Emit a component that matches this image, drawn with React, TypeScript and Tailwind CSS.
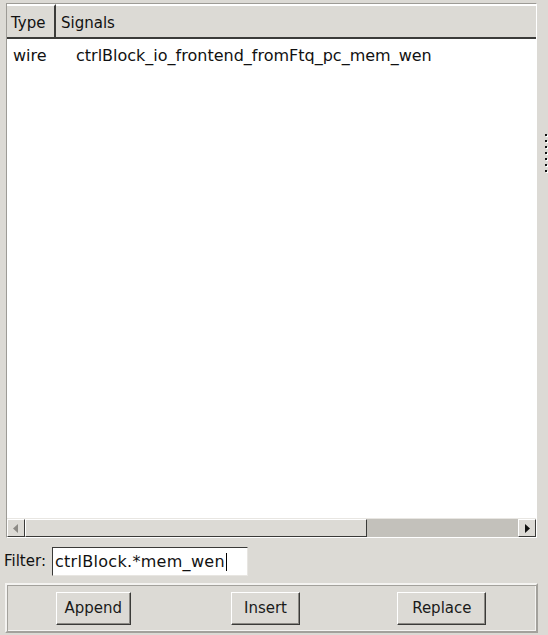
import React from "react"

const font = { fontFamily: '"DejaVu Sans", sans-serif' }

function TkButton({ label, width }: { label: string; width: string }) {
  return (
    <button
      className={`h-[33px] ${width} bg-[#dcdad5] text-[15px] text-[#1a1a1a] border border-t-white border-l-white border-r-[#3a3a38] border-b-[#3a3a38] shadow-[inset_-1px_-1px_0_#8c8a85]`}
    >
      {label}
    </button>
  )
}

export default function App() {
  return (
    <div style={font} className="w-[548px] h-[635px] bg-[#dcdad5] text-[#111] overflow-hidden">
      <div className="flex">
        {/* Signal list */}
        <div className="ml-[6px] mt-[3px] w-[531px] h-[535px] flex flex-col border border-t-[#9d9b96] border-l-[#9d9b96] border-r-white border-b-white">
          {/* Header */}
          <div className="flex h-[35px] shrink-0 border-b-2 border-[#3b3b39] text-[15px]">
            <div className="w-[49px] flex items-center pl-[4px] pt-[3px] border-t-2 border-t-white border-r-2 border-r-[#3b3b39]">
              Type
            </div>
            <div className="flex-1 flex items-center pl-[5px] pt-[3px] border-t-2 border-t-white">
              Signals
            </div>
          </div>

          {/* Rows */}
          <div className="flex-1 bg-white text-[16px]">
            <div className="flex h-[33px] items-center">
              <span className="w-[69px] pl-[6px]">wire</span>
              <span>ctrlBlock_io_frontend_fromFtq_pc_mem_wen</span>
            </div>
          </div>

          {/* Horizontal scrollbar */}
          <div className="flex h-[19px] shrink-0 bg-[#c3c1bb] border-t border-[#e8e6e2]">
            <div className="w-[18px] flex items-center justify-center bg-[#dcdad5] border border-t-white border-l-white border-r-[#3a3a38] border-b-[#3a3a38]">
              <svg width="6" height="9" viewBox="0 0 6 9">
                <path d="M5 0 L0 4.5 L5 9 Z" fill="#8c8a85" />
              </svg>
            </div>
            <div className="w-[342px] bg-[#dcdad5] border border-t-white border-l-white border-r-[#3a3a38] border-b-[#3a3a38]" />
            <div className="flex-1" />
            <div className="w-[18px] flex items-center justify-center bg-[#dcdad5] border border-t-white border-l-white border-r-[#3a3a38] border-b-[#3a3a38]">
              <svg width="6" height="9" viewBox="0 0 6 9">
                <path d="M1 0 L6 4.5 L1 9 Z" fill="#111" />
              </svg>
            </div>
          </div>
        </div>

        {/* Sash handle */}
        <div className="flex-1 flex justify-end pr-[1px] pt-[134px]">
          <div className="flex flex-col gap-[4px]">
            {[0, 1, 2, 3, 4, 5, 6].map((i) => (
              <div key={i} className="w-[2px] h-[2px] bg-[#111] shadow-[1px_1px_0_#fff]" />
            ))}
          </div>
        </div>
      </div>

      {/* Filter */}
      <div className="flex items-center mt-[9px] pl-[4px] h-[29px] text-[15px]">
        <span className="mr-[6px]">Filter:</span>
        <div className="w-[196px] h-[29px] bg-white flex items-center pl-[2px] text-[16px] border border-t-[#3a3a38] border-l-[#3a3a38] border-r-[#e8e6e2] border-b-[#e8e6e2]">
          <span className="tracking-[0.3px]">ctrlBlock.*mem_wen</span>
          <span className="inline-block w-px h-[18px] bg-black ml-px" />
        </div>
      </div>

      {/* Buttons */}
      <div className="ml-[5px] mt-[7px] w-[533px] h-[50px] grid grid-cols-3 items-center justify-items-center border-2 border-t-[#f4f3f1] border-l-[#f4f3f1] border-r-[#a3a19c] border-b-[#a3a19c] shadow-[inset_1px_1px_0_#a3a19c,inset_-1px_-1px_0_#f4f3f1]">
        <div className="-ml-[4px]">
          <TkButton label="Append" width="w-[75px]" />
        </div>
        <div className="-ml-[12px]">
          <TkButton label="Insert" width="w-[69px]" />
        </div>
        <div className="-ml-[12px]">
          <TkButton label="Replace" width="w-[89px]" />
        </div>
      </div>
    </div>
  )
}
